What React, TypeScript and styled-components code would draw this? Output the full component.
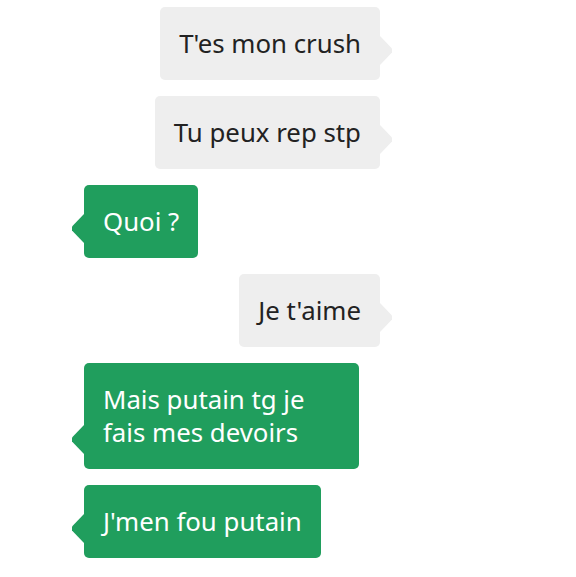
import React from "react";
import styled, { createGlobalStyle, css } from "styled-components";

const Global = createGlobalStyle`
  html, body { margin: 0; padding: 0; background: #ffffff; }
  body { font-family: "Noto Sans", "Open Sans", sans-serif; }
`;

const Thread = styled.div`
  display: flex;
  flex-direction: column;
  gap: 16px;
  width: 296px;
  margin-left: 84px;
  padding-top: 7px;
`;

const Row = styled.div<{ $mine: boolean }>`
  display: flex;
  justify-content: ${(p) => (p.$mine ? "flex-end" : "flex-start")};
`;

const Bubble = styled.div<{ $mine: boolean }>`
  position: relative;
  box-sizing: border-box;
  max-width: 275px;
  padding: 20px 19px 20px 19px;
  border-radius: 5px;
  font-size: 25.8px;
  line-height: 33px;
  ${(p) =>
    p.$mine
      ? css`
          background: #eeeeee;
          color: #222222;
        `
      : css`
          background: #209e5d;
          color: #ffffff;
        `}
`;

const Tail = styled.svg<{ $mine: boolean }>`
  position: absolute;
  bottom: 15px;
  width: 12px;
  height: 29px;
  ${(p) =>
    p.$mine
      ? css`
          right: -12px;
          fill: #eeeeee;
        `
      : css`
          left: -12px;
          fill: #209e5d;
        `}
`;

const messages: { text: string; mine: boolean }[] = [
  { text: "T'es mon crush", mine: true },
  { text: "Tu peux rep stp", mine: true },
  { text: "Quoi ?", mine: false },
  { text: "Je t'aime", mine: true },
  { text: "Mais putain tg je fais mes devoirs", mine: false },
  { text: "J'men fou putain", mine: false },
];

export default function App() {
  return (
    <>
      <Global />
      <Thread>
        {messages.map((m, i) => (
          <Row key={i} $mine={m.mine}>
            <Bubble $mine={m.mine}>
              {m.text}
              <Tail $mine={m.mine} viewBox="0 0 12 29">
                {m.mine ? (
                  <polygon points="0,0 12,12.5 12,16.5 0,29" />
                ) : (
                  <polygon points="12,0 0,12.5 0,16.5 12,29" />
                )}
              </Tail>
            </Bubble>
          </Row>
        ))}
      </Thread>
    </>
  );
}
